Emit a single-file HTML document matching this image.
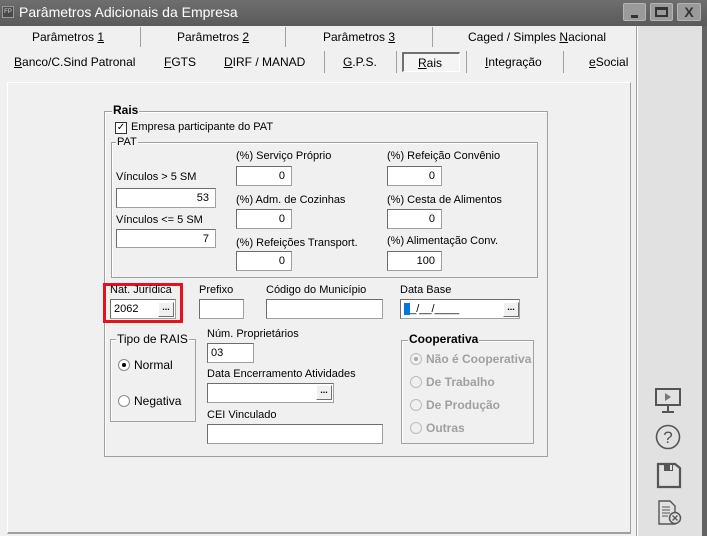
<!DOCTYPE html>
<html><head><meta charset="utf-8"><style>
*{box-sizing:border-box;margin:0;padding:0}
body{width:707px;height:536px;overflow:hidden;background:#f0f0f0;font-family:"Liberation Sans","DejaVu Sans",sans-serif;font-size:11px;color:#000;position:relative}
.a{position:absolute;white-space:nowrap}
.t{font-size:12px}
.in{position:absolute;background:#fff;border:1px solid #a0a0a0;border-top-color:#6d6d6d;border-left-color:#6d6d6d;font-size:11px;text-align:right;padding:2px 6px 0 3px;line-height:14px}
.btn{position:absolute;width:16px;height:15px;background:#f0f0f0;border:1px solid #fff;border-right-color:#707070;border-bottom-color:#707070;font-size:9px;font-weight:bold;text-align:center;line-height:8px}
.grp{position:absolute;border:1px solid #a0a0a0;box-shadow:1px 1px 0 #fff inset}
.leg{position:absolute;background:#f0f0f0;padding:0 1px;line-height:12px}
.radio{position:absolute;width:12px;height:12px;border-radius:50%;background:#fff;border:1px solid #888}
.radio.on::after{content:"";position:absolute;left:3px;top:3px;width:4px;height:4px;border-radius:50%;background:#000}
.dis .radio{background:#f0f0f0;border-color:#bbb}
.dis .radio.on::after{background:#aaa}
.sep{position:absolute;width:1px;background:#a0a0a0}
u{text-decoration:underline}
.wb{position:absolute;top:3px;height:18px;background:#9a9a9a;border:1px solid #b5b5b5;border-radius:2px}
</style></head><body>
<!-- title bar -->
<div class="a" style="left:0;top:0;width:707px;height:26px;background:linear-gradient(#6e6e6e,#5a5a5a)"></div>
<div class="a" style="left:2px;top:6px;width:12px;height:12px;background:#4a4a4a;border:1px solid #999;color:#ddd;font-size:6px;line-height:10px;text-align:center">FP</div>
<div class="a" style="left:19px;top:4px;color:#fff;font-size:14px">Parâmetros Adicionais da Empresa</div>
<div class="wb" style="left:623px;width:23px"><div class="a" style="left:7px;top:11px;width:7px;height:3px;background:#333"></div></div>
<div class="wb" style="left:650px;width:23px"><div class="a" style="left:4px;top:3px;width:13px;height:10px;border:2px solid #333;border-top-width:3px"></div></div>
<div class="wb" style="left:677px;width:24px;color:#333;font-weight:bold;font-size:14px;text-align:center;line-height:16px">X</div>
<!-- right sidebar -->
<div class="a" style="left:636px;top:26px;width:1px;height:510px;background:#a0a0a0"></div>
<div class="a" style="left:637px;top:26px;width:1px;height:510px;background:#fff"></div>
<div class="a" style="left:638px;top:26px;width:64px;height:510px;background:#e1e1e1"></div>
<div class="a" style="left:702px;top:26px;width:5px;height:510px;background:#636363"></div>
<!-- sidebar icons -->
<svg class="a" style="left:654px;top:385px" width="30" height="145" viewBox="0 0 30 145" fill="none" stroke="#555" stroke-width="2">
<rect x="2" y="4" width="24" height="16" fill="#e1e1e1"/><path d="M2 20h24"/><path d="M14 21v5M8 27h12"/><path d="M11 8l6 4-6 4z" fill="#777" stroke="none"/>
<circle cx="14" cy="52" r="11.5" stroke-width="1.6"/><text x="14" y="58" font-size="17" text-anchor="middle" fill="#555" stroke="none" font-family="Liberation Sans">?</text>
<path d="M4 79h17l5 4v19H4z" fill="#e1e1e1" stroke-width="2.2"/><rect x="10" y="79" width="9" height="7" fill="#555" stroke="none"/><rect x="16" y="80" width="2" height="5" fill="#e1e1e1" stroke="none"/>
<path d="M5 116h11l5 5v18H5z" stroke-width="1.4"/><path d="M8 122h8M8 125h8M8 128h8M8 131h6" stroke-width="1"/><circle cx="21" cy="133" r="5.5" fill="#e1e1e1" stroke-width="1.5"/><path d="M18.5 130.5l5 5M23.5 130.5l-5 5" stroke-width="1.3"/>
</svg>
<!-- tabs -->
<div class="a t" style="left:32px;top:30px">Parâmetros <u>1</u></div>
<div class="sep" style="left:140px;top:27px;height:20px"></div>
<div class="a t" style="left:177px;top:30px">Parâmetros <u>2</u></div>
<div class="sep" style="left:285px;top:27px;height:20px"></div>
<div class="a t" style="left:323px;top:30px">Parâmetros <u>3</u></div>
<div class="sep" style="left:432px;top:27px;height:20px"></div>
<div class="a t" style="left:468px;top:30px">Caged / Simples <u>N</u>acional</div>
<div class="a t" style="left:14px;top:55px"><u>B</u>anco/C.Sind Patronal</div>
<div class="a t" style="left:164px;top:55px"><u>F</u>GTS</div>
<div class="a t" style="left:224px;top:55px"><u>D</u>IRF / MANAD</div>
<div class="sep" style="left:324px;top:51px;height:22px"></div>
<div class="a t" style="left:343px;top:55px"><u>G</u>.P.S.</div>
<div class="sep" style="left:396px;top:51px;height:22px"></div>
<div class="a" style="left:402px;top:52px;width:58px;height:20px;border:1px solid #fff;border-top:2px solid #707070;border-left:2px solid #707070;background:#f4f4f4"></div>
<div class="a t" style="left:418px;top:56px"><u>R</u>ais</div>
<div class="sep" style="left:466px;top:51px;height:22px"></div>
<div class="a t" style="left:485px;top:55px"><u>I</u>ntegração</div>
<div class="sep" style="left:563px;top:51px;height:22px"></div>
<div class="a t" style="left:589px;top:55px"><u>e</u>Social</div>
<!-- page panel -->
<div class="a" style="left:7px;top:82px;width:624px;height:452px;border:1px solid #fff;border-right-color:#a0a0a0;border-bottom:2px solid #a0a0a0"></div>
<!-- Rais group -->
<div class="grp" style="left:104px;top:111px;width:444px;height:346px"></div>
<div class="leg" style="left:112px;top:104px;font-weight:bold;font-size:12px">Rais</div>
<div class="a" style="left:115px;top:122px;width:12px;height:12px;background:#fff;border:1px solid #333;font-size:10px;line-height:10px;text-align:center;font-weight:bold">✓</div>
<div class="a" style="left:131px;top:121px">Empresa participante do PAT</div>
<!-- PAT group -->
<div class="grp" style="left:111px;top:142px;width:427px;height:136px"></div>
<div class="leg" style="left:116px;top:136px">PAT</div>
<div class="a" style="left:116px;top:171px">Vínculos &gt; 5 SM</div>
<div class="in" style="left:116px;top:188px;width:100px;height:20px">53</div>
<div class="a" style="left:116px;top:214px">Vínculos &lt;= 5 SM</div>
<div class="in" style="left:116px;top:229px;width:100px;height:19px">7</div>
<div class="a" style="left:236px;top:150px">(%) Serviço Próprio</div>
<div class="in" style="left:236px;top:166px;width:56px;height:20px">0</div>
<div class="a" style="left:236px;top:194px">(%) Adm. de Cozinhas</div>
<div class="in" style="left:236px;top:209px;width:56px;height:20px">0</div>
<div class="a" style="left:236px;top:237px">(%) Refeições Transport.</div>
<div class="in" style="left:236px;top:251px;width:56px;height:20px">0</div>
<div class="a" style="left:387px;top:150px">(%) Refeição Convênio</div>
<div class="in" style="left:387px;top:166px;width:55px;height:20px">0</div>
<div class="a" style="left:387px;top:194px">(%) Cesta de Alimentos</div>
<div class="in" style="left:387px;top:209px;width:55px;height:20px">0</div>
<div class="a" style="left:387px;top:235px">(%) Alimentação Conv.</div>
<div class="in" style="left:387px;top:251px;width:55px;height:20px">100</div>
<!-- Nat juridica -->
<div class="a" style="left:103px;top:283px;width:80px;height:40px;border:3px solid #e8101a"></div>
<div class="a" style="left:110px;top:284px">Nat. Jurídica</div>
<div class="in" style="left:110px;top:299px;width:66px;height:20px;text-align:left">2062</div>
<div class="btn" style="left:158px;top:302px">...</div>
<div class="a" style="left:199px;top:284px">Prefixo</div>
<div class="in" style="left:199px;top:299px;width:45px;height:20px"></div>
<div class="a" style="left:266px;top:284px">Código do Município</div>
<div class="in" style="left:266px;top:299px;width:117px;height:20px"></div>
<div class="a" style="left:400px;top:284px">Data Base</div>
<div class="in" style="left:400px;top:299px;width:120px;height:20px;text-align:left"><span style="background:#0078d7;color:#0078d7">_</span>_/__/____</div>
<div class="btn" style="left:503px;top:302px">...</div>
<!-- Tipo de RAIS -->
<div class="grp" style="left:110px;top:339px;width:86px;height:83px"></div>
<div class="leg" style="left:116px;top:333px;font-size:12px">Tipo de RAIS</div>
<div class="radio on" style="left:118px;top:359px"></div>
<div class="a t" style="left:134px;top:358px">Normal</div>
<div class="radio" style="left:118px;top:395px"></div>
<div class="a t" style="left:134px;top:394px">Negativa</div>
<!-- middle -->
<div class="a" style="left:207px;top:328px">Núm. Proprietários</div>
<div class="in" style="left:207px;top:343px;width:47px;height:20px;text-align:left">03</div>
<div class="a" style="left:207px;top:368px">Data Encerramento Atividades</div>
<div class="in" style="left:207px;top:383px;width:127px;height:20px"></div>
<div class="btn" style="left:316px;top:385px">...</div>
<div class="a" style="left:207px;top:409px">CEI Vinculado</div>
<div class="in" style="left:207px;top:424px;width:176px;height:20px"></div>
<!-- Cooperativa -->
<div class="grp" style="left:401px;top:340px;width:133px;height:104px"></div>
<div class="leg" style="left:408px;top:333px;font-weight:bold;font-size:12px">Cooperativa</div>
<div class="dis">
<div class="radio on" style="left:410px;top:353px"></div>
<div class="a t" style="left:426px;top:352px;color:#a0a0a0;font-weight:bold">Não é Cooperativa</div>
<div class="radio" style="left:410px;top:376px"></div>
<div class="a t" style="left:426px;top:375px;color:#a0a0a0;font-weight:bold">De Trabalho</div>
<div class="radio" style="left:410px;top:399px"></div>
<div class="a t" style="left:426px;top:398px;color:#a0a0a0;font-weight:bold">De Produção</div>
<div class="radio" style="left:410px;top:422px"></div>
<div class="a t" style="left:426px;top:421px;color:#a0a0a0;font-weight:bold">Outras</div>
</div>
</body></html>
